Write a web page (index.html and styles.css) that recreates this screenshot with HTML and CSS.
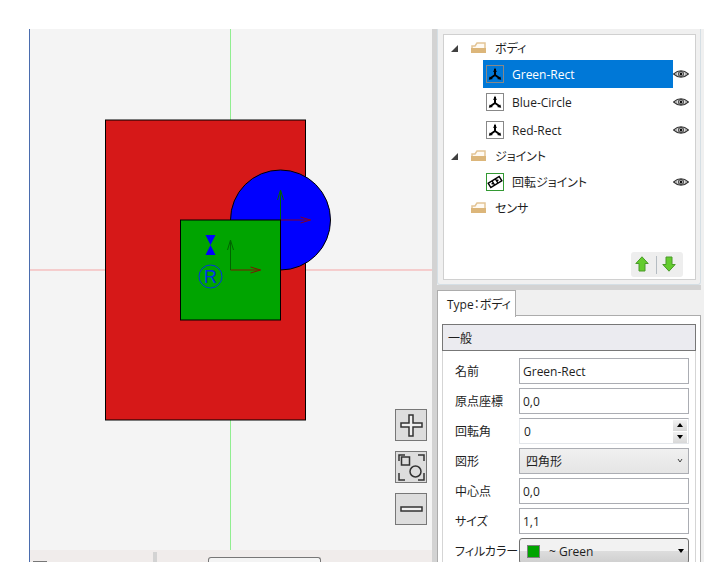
FILE: index.html
```html
<!DOCTYPE html>
<html lang="ja">
<head>
    <meta charset="UTF-8">
    <meta name="viewport" content="width=device-width, initial-scale=1.0">
    <title>Green-Rect</title>
    <link rel="stylesheet" href="styles.css">
</head>
<body>
    <!-- Shared icons -->
    <svg class="defs" width="0" height="0">
        <symbol id="folder" viewBox="0 0 15 12">
            <path d="M1 10V4h3l2-3h8v9z" fill="#fffaf2" stroke="#e3c596" stroke-width="1.500"/>
            <path d="M0 6h15v5H0z" fill="#dcb67a"/>
        </symbol>
        <symbol id="body" viewBox="0 0 18 18">
            <path d="M9 4v6M9 10L4 13.500M9 10l5 3.500" fill="none" stroke="#000" stroke-width="2"/>
            <path d="M9 2.500L10.800 7H7.200zM2.800 14.800l1-3.300 3.200 2.500zM15.200 14.800l-1-3.300L11 14z"/>
        </symbol>
        <symbol id="joint" viewBox="0 0 18 18">
            <g fill="none" stroke="#000" stroke-width="1.400" transform="rotate(-32 9 9)">
                <rect x="2.500" y="6.500" width="13" height="5"/>
                <path d="M7 6.500v5M11 6.500v5M5 9h2.500M10.500 9H13"/>
            </g>
        </symbol>
        <symbol id="eye" viewBox="0 0 16 10">
            <path d="M.6 5Q8-1.500 15.400 5 8 11.500.6 5z" fill="#fff" stroke="#333" stroke-width="1.100"/>
            <path d="M2.500 5Q8 1 13.500 5 8 9 2.500 5z" fill="none" stroke="#777" stroke-width=".6"/>
            <circle cx="8" cy="5" r="2.600" fill="none" stroke="#333" stroke-width=".9"/>
            <circle cx="8" cy="5" r="1.500" fill="#111"/>
        </symbol>
        <symbol id="arrow" viewBox="0 0 14 16">
            <path d="M7 .8L13.200 7.500H10V15H4V7.500H.8z" fill="#64cc2e" stroke="#4a9a2a"/>
        </symbol>
    </svg>

    <div class="app">
        <main class="workspace">
            <div class="canvas">
                <svg class="scene" viewBox="0 0 402 521" preserveAspectRatio="xMidYMin meet">
                    <g transform="translate(200.500 241)">
                        <path d="M0-241V280" stroke="#90ee90"/>
                        <path d="M-201 0H202" stroke="#f5a5a5"/>
                        <g stroke="#000">
                            <rect x="-125" y="-150" width="200" height="300" fill="#d61818"/>
                            <circle cx="50" cy="-50" r="50" fill="#00f"/>
                        </g>
                        <g fill="none" transform="translate(50 -50)">
                            <path d="M0 0H30M20-3L30 0 20 3" stroke="#80002a"/>
                            <path d="M0 0V-30M-3-20L0-30 3-20" stroke="#006400"/>
                        </g>
                        <rect x="-50" y="-50" width="100" height="100" fill="#00a400" stroke="#000"/>
                        <g fill="none">
                            <path d="M0 0H30M20-3L30 0 20 3" stroke="#7a1a00"/>
                            <path d="M0 0V-30M-3-20L0-30 3-20" stroke="#006400"/>
                        </g>
                        <path d="M-25-35h10l-5 10zM-25-15h10l-5-10z" fill="#00f"/>
                        <circle cx="-20" cy="6.500" r="11.500" fill="none" stroke="#0030e8"/>
                        <text x="-20" y="13" class="mark">R</text>
                    </g>
                </svg>
                <div class="zoom">
                    <button type="button" aria-label="+">
                        <svg width="30" height="30"><path d="M13 5h4v8h9v4h-9v9h-4v-9H5v-4h8z" fill="#f0f0f0" stroke="#333" stroke-width="1.500"/></svg>
                    </button>
                    <button type="button" aria-label="全体">
                        <svg width="30" height="30" fill="none" stroke="#333" stroke-width="1.500">
                            <path d="M3 9V3h6M22 3h6v6M3 21v7h6M28 21v7h-6"/>
                            <rect x="5.500" y="5" width="8" height="8"/>
                            <circle cx="19.500" cy="19.500" r="5.500"/>
                        </svg>
                    </button>
                    <button type="button" aria-label="-">
                        <svg width="30" height="30"><path d="M5 13h21v4H5z" fill="#f0f0f0" stroke="#333" stroke-width="1.500"/></svg>
                    </button>
                </div>
            </div>
            <div class="statusbar">
                <span class="status-icon"></span>
                <span class="status-split"></span>
                <span class="status-box"></span>
            </div>
        </main>

        <aside class="side">
            <div class="tree-frame">
                <div class="tree">
                    <div class="group">
                        <svg class="twisty" viewBox="0 0 7 7"><path d="M7 0v7H0z"/></svg>
                        <svg class="folder"><use href="#folder"/></svg>
                        <span>ボディ</span>
                    </div>
                    <div class="item selected">
                        <div class="node"><svg class="kind"><use href="#body"/></svg><span>Green-Rect</span></div>
                        <svg class="eye"><use href="#eye"/></svg>
                    </div>
                    <div class="item">
                        <div class="node"><svg class="kind"><use href="#body"/></svg><span>Blue-Circle</span></div>
                        <svg class="eye"><use href="#eye"/></svg>
                    </div>
                    <div class="item">
                        <div class="node"><svg class="kind"><use href="#body"/></svg><span>Red-Rect</span></div>
                        <svg class="eye"><use href="#eye"/></svg>
                    </div>
                    <div class="group">
                        <svg class="twisty" viewBox="0 0 7 7"><path d="M7 0v7H0z"/></svg>
                        <svg class="folder"><use href="#folder"/></svg>
                        <span>ジョイント</span>
                    </div>
                    <div class="item">
                        <div class="node"><svg class="kind joint"><use href="#joint"/></svg><span>回転ジョイント</span></div>
                        <svg class="eye"><use href="#eye"/></svg>
                    </div>
                    <div class="group">
                        <span class="twisty"></span>
                        <svg class="folder"><use href="#folder"/></svg>
                        <span>センサ</span>
                    </div>
                    <div class="order">
                        <button type="button" aria-label="上へ"><svg><use href="#arrow"/></svg></button>
                        <span class="order-split"></span>
                        <button type="button" aria-label="下へ" class="down"><svg><use href="#arrow"/></svg></button>
                    </div>
                </div>
            </div>

            <div class="tabs">
                <button type="button" class="tab">Type：ボディ</button>
            </div>
            <div class="props">
                <div class="section">一般</div>
                <form class="fields">
                    <label for="name">名前</label>
                    <input type="text" id="name" value="Green-Rect">

                    <label for="origin">原点座標</label>
                    <input type="text" id="origin" value="0,0">

                    <label for="angle">回転角</label>
                    <div class="spinner">
                        <input type="text" id="angle" value="0">
                        <div class="spin">
                            <button type="button" aria-label="増やす"><svg viewBox="0 0 6 4"><path d="M0 4l3-4 3 4z"/></svg></button>
                            <button type="button" aria-label="減らす"><svg viewBox="0 0 6 4"><path d="M0 0l3 4 3-4z"/></svg></button>
                        </div>
                    </div>

                    <label for="shape">図形</label>
                    <div class="combo">
                        <select id="shape"><option>四角形</option></select>
                        <svg class="caret" viewBox="0 0 6 6"><path d="M1 1l2 3 2-3" fill="none" stroke="#444"/></svg>
                    </div>

                    <label for="center">中心点</label>
                    <input type="text" id="center" value="0,0">

                    <label for="size">サイズ</label>
                    <input type="text" id="size" value="1,1">

                    <label for="fill">フィルカラー</label>
                    <div class="combo color">
                        <span class="swatch"></span>
                        <select id="fill"><option>~ Green</option></select>
                        <svg class="caret" viewBox="0 0 6 4"><path d="M0 0l3 4 3-4z"/></svg>
                    </div>
                </form>
            </div>
        </aside>
    </div>
</body>
</html>
```

FILE: styles.css
```css
* {
    box-sizing: border-box;
}
body {
    margin: 0;
    padding: 29px 16px 24px 29px;
    height: 100vh;
    background-color: #fff;
    color: #1e1e1e;
    font-family: "Open Sans", "Noto Sans CJK JP", sans-serif;
    font-size: 12px;
    font-feature-settings: "palt";
}
input, select, button {
    font: inherit;
    font-feature-settings: inherit;
    color: inherit;
    margin: 0;
    padding: 0;
    border: 0;
    border-radius: 0;
}
svg {
    display: block;
}
.defs {
    position: absolute;
}
.app {
    display: flex;
    height: 100%;
    overflow: hidden;
}

/* drawing area */
.workspace {
    flex: 3;
    display: flex;
    flex-direction: column;
    min-width: 0;
    border-left: 1px solid #4a6cae;
    background-color: #f4f4f4;
}
.canvas {
    position: relative;
    flex: 1;
    min-height: 0;
}
.scene {
    width: 100%;
    height: 100%;
}
.mark {
    font-family: "Liberation Sans", sans-serif;
    font-size: 18px;
    fill: #0030e8;
    text-anchor: middle;
}
.zoom {
    position: absolute;
    right: 5px;
    bottom: 25px;
    display: flex;
    flex-direction: column;
    gap: 10px;
}
.zoom button {
    width: 32px;
    height: 32px;
    border: 1px solid #777;
    background-color: #ddd;
}
.statusbar {
    display: flex;
    align-items: flex-end;
    height: 12px;
    padding-left: 3px;
    background-color: #f0eceb;
    overflow: hidden;
}
.status-icon {
    width: 14px;
    height: 1px;
    background-color: #777;
}
.status-split {
    width: 4px;
    height: 10px;
    margin-left: 106px;
    background-color: #d3d3d3;
}
.status-box {
    width: 113px;
    height: 5px;
    margin-left: 51px;
    border: 1px solid #777;
    border-bottom: 0;
    border-radius: 3px 3px 0 0;
    background-color: #f4f4f4;
}

/* side panel */
.side {
    flex: 2;
    display: flex;
    flex-direction: column;
    min-width: 0;
    max-width: 272px;
    padding-right: 3px;
    border-left: 5px solid #d3d3d3;
    background-color: #f0f0f0;
}
.tree-frame {
    flex: none;
    padding: 5px 4px 4px 5px;
    border: 1px solid #d5dfe5;
    border-top: 0;
    border-radius: 0 0 3px 3px;
}
.tree {
    display: flex;
    flex-direction: column;
    height: 246px;
    padding: 1px 6px 2px 7px;
    border: 1px solid #d0d0d0;
    background-color: #fff;
}
.group {
    display: flex;
    align-items: center;
    height: 24px;
}
.twisty {
    width: 7px;
    height: 7px;
    margin-right: 13px;
    fill: #404040;
}
.folder {
    width: 15px;
    height: 12px;
    margin-right: 9px;
}
.item {
    display: flex;
    align-items: center;
    height: 28px;
    padding-left: 32px;
}
.node {
    flex: 1;
    display: flex;
    align-items: center;
    gap: 8px;
    height: 28px;
    padding-left: 3px;
}
.selected .node {
    background-color: #0078d7;
    color: #fff;
}
.kind {
    width: 18px;
    height: 18px;
    outline: 1px solid #888;
    outline-offset: -1px;
}
.joint {
    outline-color: #339933;
}
.eye {
    width: 16px;
    height: 10px;
}
.order {
    display: flex;
    align-items: center;
    align-self: flex-end;
    margin: auto 6px 0 0;
    padding-right: 1px;
    border-radius: 3px;
    background-color: #eee;
}
.order button {
    width: 24px;
    height: 25px;
    padding: 3px 5px 5px 4px;
    background: none;
}
.order svg {
    width: 14px;
    height: 16px;
}
.order-split {
    width: 1px;
    height: 18px;
    margin: 0 1px;
    background-color: #b5bcc2;
}
.down svg {
    transform: rotate(180deg);
}

/* property sheet */
.tabs {
    flex: none;
    border-top: 5px solid #d3d3d3;
    height: 30px;
}
.tab {
    position: relative;
    height: 27px;
    padding: 0 4px 0 9px;
    border: 1px solid #acacac;
    border-bottom: 0;
    background-color: #fff;
}
.props {
    flex: 1;
    padding: 8px 4px 0;
    border: 1px solid #acacac;
    border-bottom: 0;
    background-color: #fff;
}
.section {
    height: 27px;
    padding-left: 5px;
    border: 1px solid #777;
    background-color: #ebebf0;
    line-height: 27px;
}
.fields {
    display: grid;
    grid-template-columns: 64px 1fr;
    grid-auto-rows: 26px;
    row-gap: 4px;
    align-items: center;
    padding: 7px 6px 4px 12px;
    border: 1px solid #d5d5d5;
    border-top: 0;
}
.fields label {
    white-space: nowrap;
}
.fields input,
.fields select {
    width: 100%;
    height: 26px;
    min-width: 0;
    padding: 0 3px;
    border: 1px solid #abadb3;
    background-color: #fff;
}
.fields .spinner {
    display: flex;
    height: 26px;
    padding-right: 1px;
    border: 1px solid #e3e6ea;
    border-top-color: #abadb3;
    align-items: center;
}
.fields .spinner input {
    flex: 1;
    height: 24px;
    padding: 0 4px;
    border: 0;
}
.spin {
    display: flex;
    flex-direction: column;
    gap: 1px;
}
.spin button {
    display: flex;
    align-items: center;
    justify-content: center;
    width: 14px;
    height: 11px;
    background: linear-gradient(#f2f2f2, #d8d8d8);
}
.spin svg {
    width: 6px;
    height: 4px;
}
.combo {
    position: relative;
}
.fields select {
    display: block;
    appearance: none;
    padding: 0 6px;
    background: linear-gradient(#f0f0f0, #e5e5e5);
}
.caret {
    position: absolute;
    right: 6px;
    top: 10px;
    width: 6px;
    height: 6px;
    pointer-events: none;
}
.fields .color select {
    padding-left: 29px;
    border-color: #707070;
    border-radius: 3px;
    background: linear-gradient(#f2f2f2 50%, #dddddd 50%, #cfcfcf);
}
.color .caret {
    right: 5px;
}
.swatch {
    position: absolute;
    left: 8px;
    top: 7px;
    width: 13px;
    height: 13px;
    border: 1px solid #808080;
    background-color: #00a400;
}
```
